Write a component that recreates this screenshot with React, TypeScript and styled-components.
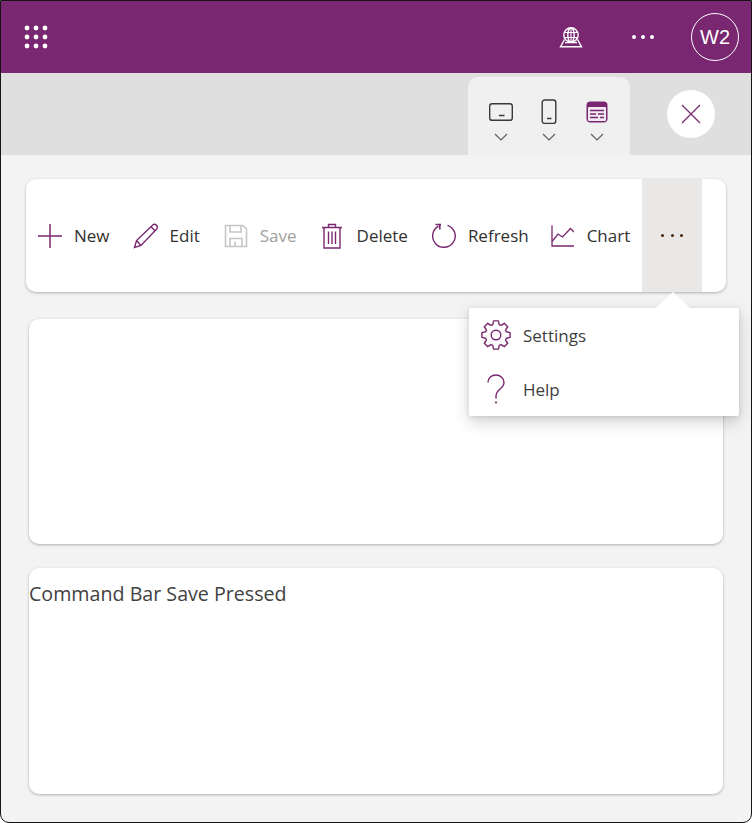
import styled, { createGlobalStyle } from 'styled-components';

const purple = '#782770';

const GlobalStyle = createGlobalStyle`
  html, body {
    margin: 0;
    padding: 0;
    background: #fff;
  }
  * {
    box-sizing: border-box;
  }
`;

function WaffleIcon() {
  const spots = [0, 9, 18];
  return (
    <svg width="24" height="24" viewBox="0 0 24 24">
      {spots.map((y) =>
        spots.map((x) => <circle key={`${x}-${y}`} cx={x + 3} cy={y + 3} r="2.4" fill="#fff" />)
      )}
    </svg>
  );
}

function GlobeIcon() {
  return (
    <svg width="24" height="21" viewBox="0 0 24 21" fill="none" stroke="#fff" strokeWidth="1.4">
      <circle cx="12" cy="8" r="7.2" />
      <ellipse cx="12" cy="8" rx="3.2" ry="7.2" />
      <path d="M5 5.5h14M5 10.5h14M12 1v14" strokeWidth="1.1" />
      <path d="M5.5 12.5 1.5 19.8h21l-4-7.3" />
      <path d="M6 15.6h12" strokeWidth="1.1" />
    </svg>
  );
}

function TabletIcon() {
  return (
    <svg width="26" height="20" viewBox="0 0 26 20" fill="none" stroke="#3b3a39" strokeWidth="1.4">
      <rect x="1.7" y="1.7" width="22.6" height="16.6" rx="2.4" />
      <path d="M11 13.5h5.5" />
    </svg>
  );
}

function PhoneIcon() {
  return (
    <svg width="16" height="26" viewBox="0 0 16 26" fill="none" stroke="#3b3a39" strokeWidth="1.4">
      <rect x="1.2" y="1" width="13.6" height="23.4" rx="2.4" />
      <path d="M6 19.5h4.5" />
    </svg>
  );
}

function BrowserIcon() {
  return (
    <svg width="22" height="22" viewBox="0 0 22 22">
      <rect x="0.5" y="0.5" width="21" height="21" rx="4" fill={purple} />
      <rect x="2" y="6" width="18" height="14" rx="1" fill="#f0eaf0" />
      <path d="M4 9.5h14M4 13h6M12 13h6M4 16.5h8M14 16.5h4" stroke={purple} strokeWidth="1.3" />
    </svg>
  );
}

function ChevronIcon() {
  return (
    <svg width="14" height="8" viewBox="0 0 14 8" fill="none" stroke="#605e5c" strokeWidth="1.2">
      <path d="M1 1l6 6 6-6" />
    </svg>
  );
}

function CloseIcon() {
  return (
    <svg width="20" height="20" viewBox="0 0 20 20" fill="none" stroke={purple} strokeWidth="1.2">
      <path d="M1 1l18 18M19 1 1 19" />
    </svg>
  );
}

function PlusIcon() {
  return (
    <svg width="26" height="26" viewBox="0 0 26 26" fill="none" stroke={purple} strokeWidth="1.5">
      <path d="M1 13h24M13 1v24" />
    </svg>
  );
}

function PencilIcon() {
  return (
    <svg width="26" height="26" viewBox="0 0 26 26" fill="none" stroke={purple} strokeWidth="1.4">
      <path d="M1.5 24.5 3.5 17.5 19.5 2.2c1.3-1.2 3-1 4 0s1.2 2.8 0 4L8 22.5z" />
      <path d="M3.5 17.5 8 22.5M18 3.8l4.2 4.2" />
    </svg>
  );
}

function SaveIcon() {
  return (
    <svg width="24" height="24" viewBox="0 0 24 24" fill="none" stroke="#c8c6c4" strokeWidth="1.6">
      <path d="M1.5 1.5h17.5l3.5 3.5v17.5h-21z" />
      <path d="M6 1.5v6.5h11V1.5M6 22.5v-8h12v8M11 17.5v5" />
    </svg>
  );
}

function TrashIcon() {
  return (
    <svg width="20" height="26" viewBox="0 0 20 26" fill="none" stroke={purple} strokeWidth="1.4">
      <path d="M0 4.5h20M6.5 4.5V1.5h7v3" />
      <path d="M2 4.5v20.5h16V4.5" />
      <path d="M6.5 8.5v12.5M10 8.5v12.5M13.5 8.5v12.5" />
    </svg>
  );
}

function RefreshIcon() {
  return (
    <svg width="26" height="26" viewBox="0 0 26 26" fill="none" stroke={purple} strokeWidth="1.4">
      <path d="M16.5 2.3a11.3 11.3 0 1 1-9 .8" />
      <path d="M4.5 1.5h4.7v.9M8.8 1.5v5" strokeWidth="1.6" />
    </svg>
  );
}

function ChartIcon() {
  return (
    <svg width="23" height="22" viewBox="0 0 23 22" fill="none" stroke={purple} strokeWidth="1.3">
      <path d="M1 0.5v20.5h22" />
      <path d="M1 16.5l6-7.5 4.5 3 8-8.5L23 7" />
    </svg>
  );
}

// eight-toothed outline, worked out from the tooth angles
function gearPath() {
  const cx = 16;
  const cy = 15;
  const points: string[] = [];
  for (let i = 0; i < 8; i++) {
    const a = (i * Math.PI) / 4;
    const steps: [number, number][] = [
      [10.8, -0.3],
      [14.3, -0.17],
      [14.3, 0.17],
      [10.8, 0.3],
    ];
    steps.forEach(([r, off]) => {
      const x = cx + r * Math.sin(a + off);
      const y = cy - r * Math.cos(a + off);
      points.push(`${x.toFixed(2)} ${y.toFixed(2)}`);
    });
  }
  return `M${points.join('L')}Z`;
}

function GearIcon() {
  return (
    <svg width="32" height="30" viewBox="0 0 32 30" fill="none" stroke={purple} strokeWidth="1.4">
      <circle cx="16" cy="15" r="4.8" />
      <path d={gearPath()} strokeLinejoin="round" />
    </svg>
  );
}

function HelpIcon() {
  return (
    <svg width="18" height="30" viewBox="0 0 18 30" fill="none" stroke={purple} strokeWidth="1.4">
      <path d="M1 8.5C1 4 4.5 1 9 1s8 3.2 8 7.5c0 6.5-8 6.5-8 13.5v2.5" />
      <circle cx="9" cy="28.5" r="1.1" fill={purple} stroke="none" />
    </svg>
  );
}

const commands = [
  { label: 'New', icon: <PlusIcon />, before: 0, gap: 11 },
  { label: 'Edit', icon: <PencilIcon />, before: 23, gap: 11 },
  { label: 'Save', icon: <SaveIcon />, before: 24, gap: 12, disabled: true },
  { label: 'Delete', icon: <TrashIcon />, before: 25, gap: 15 },
  { label: 'Refresh', icon: <RefreshIcon />, before: 23, gap: 11 },
  { label: 'Chart', icon: <ChartIcon />, before: 22, gap: 13 },
];

export default function App() {
  return (
    <>
      <GlobalStyle />
      <Frame>
        <Header>
          <WaffleButton>
            <WaffleIcon />
          </WaffleButton>
          <HeaderActions>
            <GlobeButton>
              <GlobeIcon />
            </GlobeButton>
            <HeaderDots>
              <i />
              <i />
              <i />
            </HeaderDots>
            <Avatar>W2</Avatar>
          </HeaderActions>
        </Header>
        <PreviewBar>
          <DeviceTabs>
            <DeviceOption>
              <IconSlot>
                <TabletIcon />
              </IconSlot>
              <ChevronIcon />
            </DeviceOption>
            <DeviceOption>
              <IconSlot>
                <PhoneIcon />
              </IconSlot>
              <ChevronIcon />
            </DeviceOption>
            <DeviceOption>
              <IconSlot>
                <BrowserIcon />
              </IconSlot>
              <ChevronIcon />
            </DeviceOption>
          </DeviceTabs>
          <CloseButton>
            <CloseIcon />
          </CloseButton>
        </PreviewBar>
        <Content>
          <CommandBar>
            <CommandList>
              {commands.map((c) => (
                <Command key={c.label} $before={c.before} $gap={c.gap} $disabled={c.disabled}>
                  {c.icon}
                  {c.label}
                </Command>
              ))}
            </CommandList>
            <OverflowButton>
              <i />
              <i />
              <i />
            </OverflowButton>
            <OverflowMenu>
              <MenuItem>
                <MenuIconSlot>
                  <GearIcon />
                </MenuIconSlot>
                Settings
              </MenuItem>
              <MenuItem>
                <MenuIconSlot>
                  <HelpIcon />
                </MenuIconSlot>
                Help
              </MenuItem>
            </OverflowMenu>
          </CommandBar>
          <Card>&nbsp;</Card>
          <Card>Command Bar Save Pressed</Card>
        </Content>
      </Frame>
    </>
  );
}

const Frame = styled.div`
  width: 752px;
  height: 823px;
  display: flex;
  flex-direction: column;
  overflow: hidden;
  background: #f3f3f3;
  border: 1px solid #141414;
  border-radius: 0 0 9px 9px;
  font-family: 'Open Sans', 'Noto Sans', sans-serif;
`;

const Header = styled.header`
  height: 72px;
  flex-shrink: 0;
  display: flex;
  align-items: center;
  justify-content: space-between;
  background: ${purple};
  padding: 0 12px 0 23px;
`;

const WaffleButton = styled.div`
  display: flex;
`;

const HeaderActions = styled.div`
  display: flex;
  align-items: center;
`;

const GlobeButton = styled.div`
  display: flex;
  margin-right: 49px;
`;

const HeaderDots = styled.div`
  display: flex;
  gap: 5px;
  margin-right: 37px;
  i {
    width: 4px;
    height: 4px;
    border-radius: 50%;
    background: #fff;
  }
`;

const Avatar = styled.div`
  width: 48px;
  height: 48px;
  border: 1px solid #fff;
  border-radius: 50%;
  display: flex;
  align-items: center;
  justify-content: center;
  color: #fff;
  font-family: 'Liberation Sans', sans-serif;
  font-size: 20px;
`;

const PreviewBar = styled.div`
  height: 82px;
  flex-shrink: 0;
  display: flex;
  align-items: flex-end;
  justify-content: flex-end;
  padding-right: 36px;
  background: #dfdfdf;
`;

const DeviceTabs = styled.div`
  width: 162px;
  height: 78px;
  display: flex;
  justify-content: center;
  padding: 22px 5px 0;
  margin-right: 37px;
  background: #f0f0f0;
  border-radius: 10px 10px 0 0;
`;

const DeviceOption = styled.div`
  width: 48px;
  display: flex;
  flex-direction: column;
  align-items: center;
  gap: 8px;
`;

const IconSlot = styled.div`
  height: 26px;
  display: flex;
  align-items: center;
`;

const CloseButton = styled.div`
  width: 48px;
  height: 48px;
  margin-bottom: 17px;
  border-radius: 50%;
  background: #fff;
  display: flex;
  align-items: center;
  justify-content: center;
`;

const Content = styled.main`
  flex: 1;
  display: flex;
  flex-direction: column;
  padding: 24px 25px 28px 25px;
`;

const CommandBar = styled.div`
  position: relative;
  height: 113px;
  display: flex;
  align-items: stretch;
  background: #fff;
  border-radius: 10px;
  box-shadow: 0 1px 3px rgba(0, 0, 0, 0.28);
  padding-right: 24px;
  margin-bottom: 27px;
`;

const CommandList = styled.div`
  flex: 1;
  display: flex;
  align-items: center;
  padding-left: 11px;
`;

const Command = styled.div<{ $before: number; $gap: number; $disabled?: boolean }>`
  display: flex;
  align-items: center;
  margin-left: ${(p) => p.$before}px;
  gap: ${(p) => p.$gap}px;
  font-size: 17px;
  color: ${(p) => (p.$disabled ? '#a19f9d' : '#323130')};
`;

const OverflowButton = styled.div`
  width: 60px;
  display: flex;
  align-items: center;
  justify-content: center;
  gap: 6.5px;
  background: #eae8e6;
  i {
    width: 3px;
    height: 3px;
    border-radius: 50%;
    background: #4a2b12;
  }
`;

const OverflowMenu = styled.div`
  position: absolute;
  top: 129px;
  left: 443px;
  width: 270px;
  height: 108px;
  z-index: 2;
  background: #fff;
  border-radius: 2px;
  box-shadow: 0 6px 16px rgba(0, 0, 0, 0.18), 0 1px 4px rgba(0, 0, 0, 0.1);
  &::before {
    content: '';
    position: absolute;
    top: -16px;
    left: 187px;
    border-left: 17px solid transparent;
    border-right: 17px solid transparent;
    border-bottom: 16px solid #fff;
  }
`;

const MenuItem = styled.div`
  height: 54px;
  display: flex;
  align-items: center;
  padding-left: 11px;
  font-size: 17px;
  color: #3f3e3d;
`;

const MenuIconSlot = styled.div`
  width: 32px;
  display: flex;
  justify-content: center;
  margin-right: 11px;
`;

const Card = styled.section`
  height: 225px;
  margin: 0 3px 24px;
  background: #fff;
  border-radius: 10px;
  box-shadow: 0 1px 3px rgba(0, 0, 0, 0.28);
  font-size: 19.65px;
  line-height: 27px;
  padding-top: 12px;
  color: #424242;
  &:last-child {
    flex: 1;
    margin-bottom: 0;
  }
`;
